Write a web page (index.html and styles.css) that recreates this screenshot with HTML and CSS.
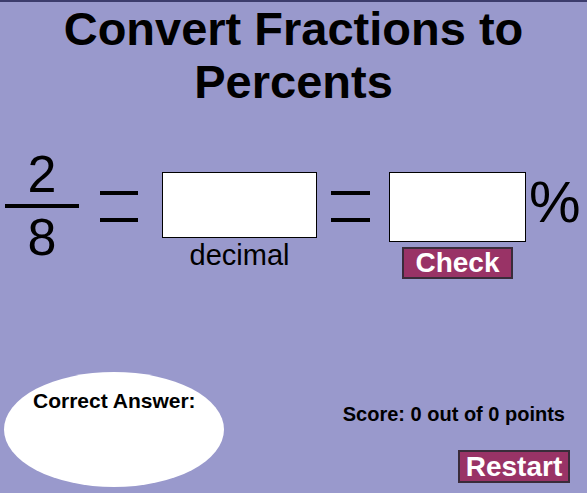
FILE: index.html
```html
<!DOCTYPE html>
<html lang="en">
<head>
<meta charset="utf-8">
<title>Convert Fractions to Percents</title>
<link rel="stylesheet" href="styles.css">
</head>
<body>
<div class="app">
  <h1 class="title">Convert Fractions to Percents</h1>
  <div class="eq-row">
    <div class="fraction">
      <div class="num">2</div>
      <div class="bar"></div>
      <div class="den">8</div>
    </div>
    <div class="equals equals-1"><span></span><span></span></div>
    <div class="col col-decimal">
      <div class="box box-decimal"></div>
      <div class="label">decimal</div>
    </div>
    <div class="equals equals-2"><span></span><span></span></div>
    <div class="col col-percent">
      <div class="box box-percent"></div>
      <div class="btn btn-check">Check</div>
    </div>
    <div class="pct">%</div>
  </div>
  <div class="bottom">
    <div class="answer">Correct Answer:</div>
    <div class="side">
      <div class="score">Score: 0 out of 0 points</div>
      <div class="btn btn-restart">Restart</div>
    </div>
  </div>
</div>
</body>
</html>
```

FILE: styles.css
```css
html, body {
  height: 100%;
}
body {
  margin: 0;
  background: #9999cc;
  border-top: 2px solid #3c3c6c;
  box-sizing: border-box;
  font-family: "Liberation Sans", Arial, sans-serif;
  color: #000;
  overflow: hidden;
}
.app {
  height: 100%;
  display: flex;
  flex-direction: column;
}
.title {
  margin: 0;
  font-size: 47px;
  line-height: 53px;
  font-weight: bold;
  text-align: center;
}
.eq-row {
  display: flex;
  align-items: flex-start;
  margin-top: 41px;
  padding-left: 5px;
}
.fraction {
  width: 74px;
  display: flex;
  flex-direction: column;
  align-items: center;
  font-size: 52px;
  line-height: 48px;
}
.fraction .num {
  margin-top: 1px;
}
.fraction .bar {
  align-self: stretch;
  height: 4px;
  background: #000;
  margin-top: 6px;
}
.fraction .den {
  margin-top: 5px;
}
.equals {
  width: 38px;
  margin-top: 42px;
  display: flex;
  flex-direction: column;
  gap: 23px;
}
.equals span {
  display: block;
  height: 4px;
  background: #000;
}
.equals-1 {
  margin-left: 21px;
}
.equals-2 {
  margin-left: 14px;
  width: 39px;
}
.col {
  display: flex;
  flex-direction: column;
  align-items: center;
  margin-top: 23px;
}
.col-decimal {
  margin-left: 24px;
}
.col-percent {
  margin-left: 19px;
}
.box {
  background: #fff;
  border: 1px solid #000;
  box-sizing: border-box;
}
.box-decimal {
  width: 155px;
  height: 66px;
}
.box-percent {
  width: 137px;
  height: 70px;
}
.label {
  font-size: 29px;
  line-height: 29px;
  margin-top: 3px;
}
.btn {
  background: #993366;
  border: 2px solid #3a2c3a;
  color: #fff;
  font-weight: bold;
  font-size: 28px;
  text-align: center;
  box-sizing: border-box;
}
.btn-check {
  width: 111px;
  height: 32px;
  line-height: 28px;
  margin-top: 5px;
}
.pct {
  font-size: 58px;
  line-height: 58px;
  margin-left: 3px;
  margin-top: 24px;
}
.bottom {
  margin-top: auto;
  padding-bottom: 6px;
  display: flex;
  justify-content: space-between;
  align-items: flex-start;
}
.answer {
  width: 220px;
  height: 115px;
  margin-left: 4px;
  border-radius: 50%;
  background: #fff;
  box-sizing: border-box;
  padding: 19px 0 0 29px;
  font-size: 21px;
  line-height: 20px;
  font-weight: bold;
}
.side {
  display: flex;
  flex-direction: column;
  align-items: flex-end;
  padding-right: 17px;
}
.score {
  margin-top: 32px;
  margin-right: 5px;
  font-size: 20px;
  line-height: 20px;
  font-weight: bold;
}
.btn-restart {
  width: 112px;
  height: 33px;
  line-height: 29px;
  margin-top: 26px;
}
```
